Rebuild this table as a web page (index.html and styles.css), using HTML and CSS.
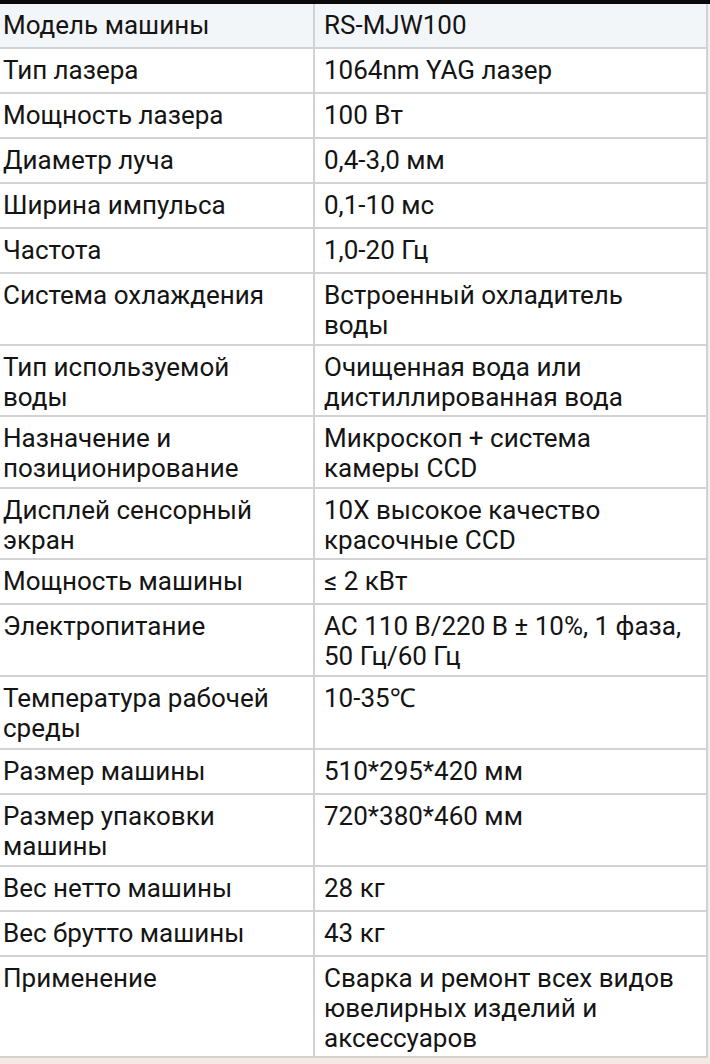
FILE: index.html
```html
<!DOCTYPE html>
<html lang="ru">
<head>
<meta charset="utf-8">
<title>Характеристики</title>
<link rel="stylesheet" href="styles.css">
</head>
<body>
<div class="topbar"></div>
<table class="spec">
  <colgroup><col class="c1"><col class="c2"></colgroup>
  <tr class="head s"><td>Модель машины</td><td>RS-MJW100</td></tr>
  <tr class="s"><td>Тип лазера</td><td>1064nm YAG лазер</td></tr>
  <tr class="s"><td>Мощность лазера</td><td>100 Вт</td></tr>
  <tr class="s"><td>Диаметр луча</td><td>0,4-3,0 мм</td></tr>
  <tr class="s"><td>Ширина импульса</td><td>0,1-10 мс</td></tr>
  <tr class="s"><td>Частота</td><td>1,0-20 Гц</td></tr>
  <tr><td>Система охлаждения</td><td>Встроенный охладитель<br>воды</td></tr>
  <tr><td>Тип используемой<br>воды</td><td>Очищенная вода или<br>дистиллированная вода</td></tr>
  <tr><td>Назначение и<br>позиционирование</td><td>Микроскоп + система<br>камеры CCD</td></tr>
  <tr><td>Дисплей сенсорный<br>экран</td><td>10X высокое качество<br>красочные CCD</td></tr>
  <tr class="s"><td>Мощность машины</td><td>≤ 2 кВт</td></tr>
  <tr><td>Электропитание</td><td>AC 110 В/220 В ± 10%, 1 фаза,<br>50 Гц/60 Гц</td></tr>
  <tr class="tall"><td>Температура рабочей<br>среды</td><td>10-35℃</td></tr>
  <tr class="s"><td>Размер машины</td><td>510*295*420 мм</td></tr>
  <tr><td>Размер упаковки<br>машины</td><td>720*380*460 мм</td></tr>
  <tr class="s"><td>Вес нетто машины</td><td>28 кг</td></tr>
  <tr class="s"><td>Вес брутто машины</td><td>43 кг</td></tr>
  <tr><td>Применение</td><td>Сварка и ремонт всех видов<br>ювелирных изделий и<br>аксессуаров</td></tr>
</table>
<div class="bottom"></div>
</body>
</html>
```
FILE: styles.css
```css
html, body {
  margin: 0;
  padding: 0;
  background: #f0f1f2;
}
body {
  width: 710px;
  height: 1064px;
  overflow: hidden;
  font-family: Roboto, "Noto Sans", sans-serif;
  color: #141414;
}
.topbar {
  height: 4px;
  background: #0a0a0a;
}
.spec {
  border-collapse: collapse;
  table-layout: fixed;
  width: 707px;
  background: #ffffff;
}
.c1 { width: 314px; }
.c2 { width: 393px; }
.spec td {
  font-size: 26px;
  line-height: 30px;
  vertical-align: top;
  padding: 6px 6px 3.5px 9px;
  border: 2px solid #d2d2d2;
}
.spec tr:first-child td { border-top: none; }
.spec td:first-child {
  border-left: none;
  padding-left: 3px;
}
.spec tr.s td { height: 33.5px; }
.spec tr.tall td { padding-bottom: 5.5px; }
.spec tr.head td { background: #f3f6f8; }
.bottom {
  height: 10px;
  background: #f3e9e2;
}
```
